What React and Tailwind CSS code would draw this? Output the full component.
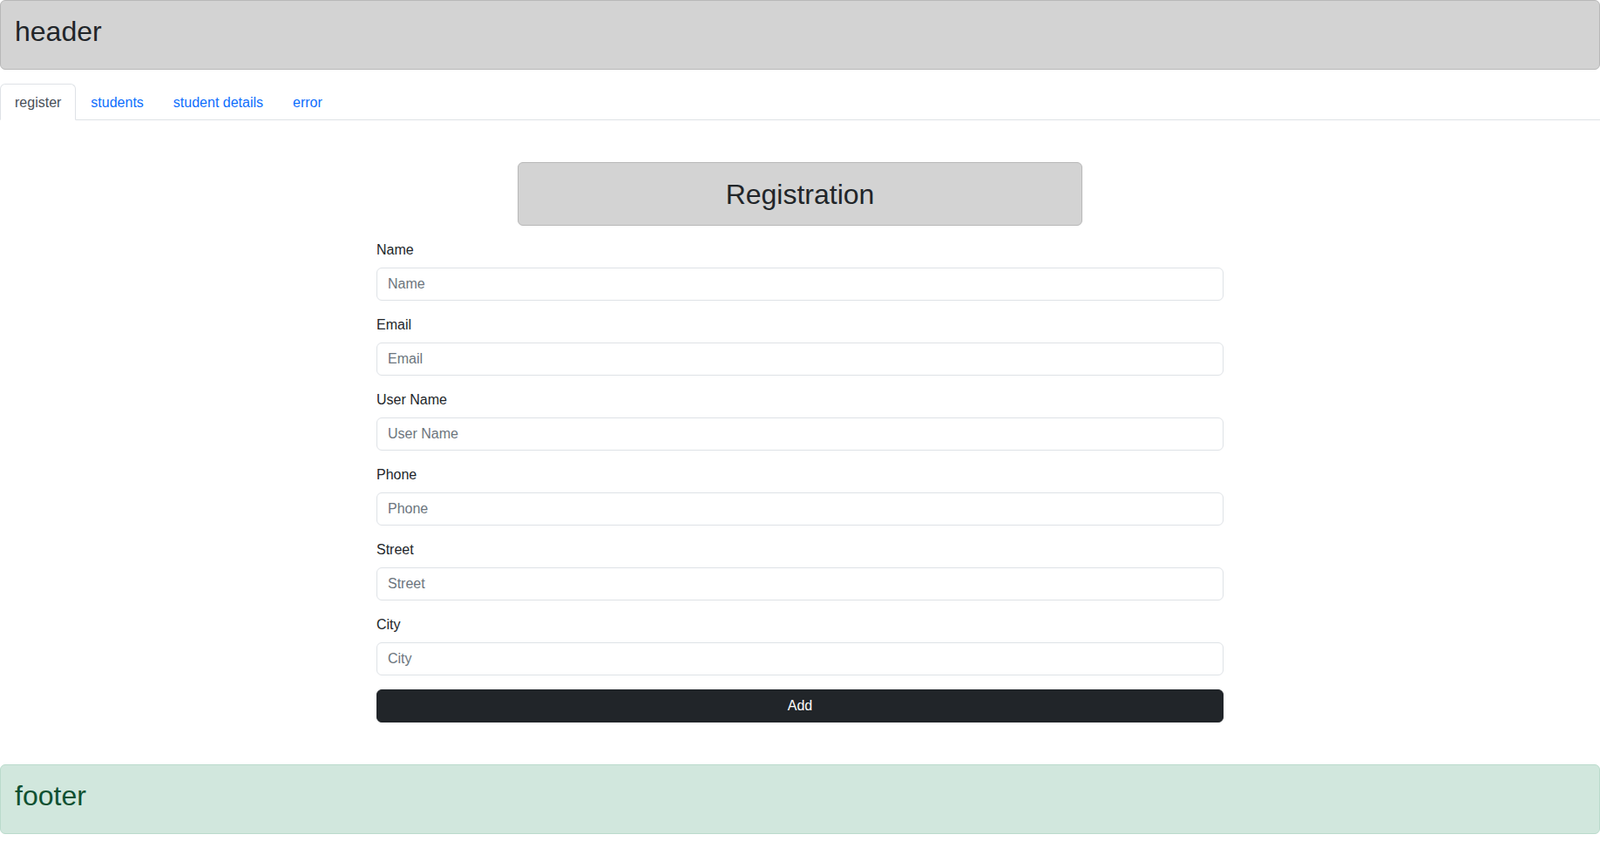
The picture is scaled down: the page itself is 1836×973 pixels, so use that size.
import React from "react";

const fields = ["Name", "Email", "User Name", "Phone", "Street", "City"];

export default function App() {
  return (
    <div
      className="min-h-screen bg-white text-[#212529] text-base"
      style={{ fontFamily: '"Liberation Sans", Arial, sans-serif' }}
    >
      <header className="mb-4 rounded-md border border-[#b8b8b8] bg-[#d3d3d3] p-4">
        <h2 className="mb-2 text-[32px] leading-[1.2] font-normal text-[#212529]">header</h2>
      </header>

      <nav className="flex border-b border-[#dee2e6]">
        <a className="-mb-px rounded-t-md border border-[#dee2e6] border-b-white bg-white px-4 pt-[9px] pb-[7px] leading-6 text-[#495057]">
          register
        </a>
        {["students", "student details", "error"].map((t) => (
          <a
            key={t}
            className="-mb-px border border-transparent px-4 pt-[9px] pb-[7px] leading-6 text-[#0d6efd]"
          >
            {t}
          </a>
        ))}
      </nav>

      <main className="mx-auto mt-12 w-[972px]">
        <div className="mx-auto mb-4 w-[648px] rounded-md border border-[#b8b8b8] bg-[#d3d3d3] px-4 pt-[17px] pb-[15px] text-center">
          <h2 className="text-[32px] leading-[1.2] font-normal text-[#212529]">Registration</h2>
        </div>
        <form onSubmit={(e) => e.preventDefault()}>
          {fields.map((f) => (
            <div key={f} className="mb-4">
              <label className="mb-2 block leading-6 text-[#212529]">{f}</label>
              <input
                type="text"
                placeholder={f}
                className="block h-[38px] w-full rounded-md border border-[#dee2e6] bg-white px-3 py-1.5 text-base leading-6 text-[#212529] placeholder:text-[#6c757d] outline-none"
              />
            </div>
          ))}
          <button
            type="submit"
            className="block h-[38px] w-full rounded-md border border-[#212529] bg-[#212529] text-base leading-6 text-white"
          >
            Add
          </button>
        </form>
      </main>

      <footer className="mt-12 rounded-md border border-[#badbcc] bg-[#d1e7dd] p-4">
        <h2 className="mb-2 text-[32px] leading-[1.2] font-normal text-[#0f5132]">footer</h2>
      </footer>
    </div>
  );
}
